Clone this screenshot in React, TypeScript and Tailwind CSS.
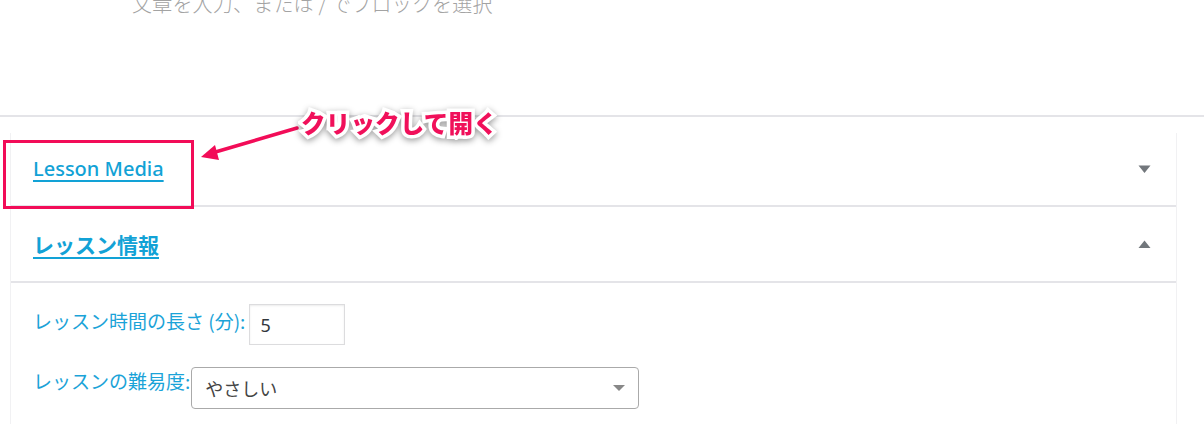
import React from 'react';

const Caret: React.FC<{ up?: boolean }> = ({ up }) => (
  <svg width="13" height="9" viewBox="0 0 13 9" className="mr-[25px]">
    <path d={up ? 'M0.5 8 L6.5 0.5 L12.5 8 Z' : 'M0.5 0.5 L12.5 0.5 L6.5 8 Z'} fill="#72777c" />
  </svg>
);

const App: React.FC = () => {
  return (
    <div className="relative h-[424px] w-[1204px] overflow-hidden bg-white font-['Noto_Sans','Noto_Sans_CJK_JP',sans-serif]">
      {/* editor placeholder */}
      <p className="-mt-[10px] pl-[132px] text-[20px] leading-[28px] tracking-[0.2px] text-[#a3a3a3] font-['Noto_Sans_CJK_JP',sans-serif] font-light">
        文章を入力、または / でブロックを選択
      </p>

      <div className="mt-[97px] border-t-2 border-[#e4e4e8]" />

      {/* meta box panel */}
      <div className="mt-[16px] ml-[10px] mr-[27px] h-[300px] border-x border-[#f1f1f3]">
        <div className="flex h-[74px] items-center justify-between border-b-2 border-[#e4e4e8] pl-[22px]">
          <a className="text-[20px] font-medium leading-[28px] text-[#12a2d6] underline decoration-[2px] underline-offset-[4px]">
            Lesson Media
          </a>
          <Caret />
        </div>

        <div className="flex h-[76px] items-center justify-between border-b-2 border-[#e4e4e8] pl-[22px]">
          <a className="font-['Noto_Sans_CJK_JP',sans-serif] text-[21px] font-bold leading-[28px] text-[#12a2d6] underline decoration-[2px] underline-offset-[4px]">
            レッスン情報
          </a>
          <Caret up />
        </div>

        <div className="flex flex-col gap-[22px] pl-[22px] pt-[21px] font-['Noto_Sans_CJK_JP',sans-serif]">
          <div className="flex items-start gap-[4px]">
            <label className="mt-[4px] text-[19px] leading-[26px] text-[#1ba3d8]">レッスン時間の長さ (分):</label>
            <input
              type="text"
              readOnly
              value="5"
              className="h-[41px] w-[96px] border border-[#dcdcde] px-[10px] text-[18px] text-[#32373c] shadow-[inset_0_1px_2px_rgba(0,0,0,0.08)] outline-none font-['Noto_Sans',sans-serif]"
            />
          </div>

          <div className="flex items-start gap-[1px]">
            <label className="mt-[1px] text-[19px] leading-[26px] text-[#1ba3d8]">レッスンの難易度:</label>
            <div className="flex h-[42px] w-[448px] items-center justify-between rounded-[4px] border border-[#aaaaaa] pl-[13px] pr-[6px]">
              <span className="text-[18px] text-[#444444]">やさしい</span>
              <svg width="14" height="8" viewBox="0 0 14 8" className="mr-[6px]">
                <path d="M1 1 L13 1 L7 7 Z" fill="#888888" />
              </svg>
            </div>
          </div>
        </div>
      </div>

      {/* annotation */}
      <div className="absolute left-[3px] top-[140px] h-[69px] w-[191px] border-[3px] border-[#f20c58]" />
      <svg className="absolute left-0 top-0" width="1204" height="424" viewBox="0 0 1204 424">
        <line x1="297" y1="128" x2="212" y2="153" stroke="#f20c58" strokeWidth="3.5" strokeLinecap="round" />
        <path d="M201 157 L215 145 L219 160 Z" fill="#f20c58" />
      </svg>
      <div className="absolute left-[301px] top-[107px] font-['Noto_Sans_CJK_JP',sans-serif] text-[24.5px] font-black leading-[32px] tracking-[0.2px] text-[#f0105a] [-webkit-text-stroke:7px_white] [paint-order:stroke_fill] [filter:drop-shadow(0_2px_3px_rgba(0,0,0,0.4))]">
        クリックして開く
      </div>
    </div>
  );
};

export default App;
